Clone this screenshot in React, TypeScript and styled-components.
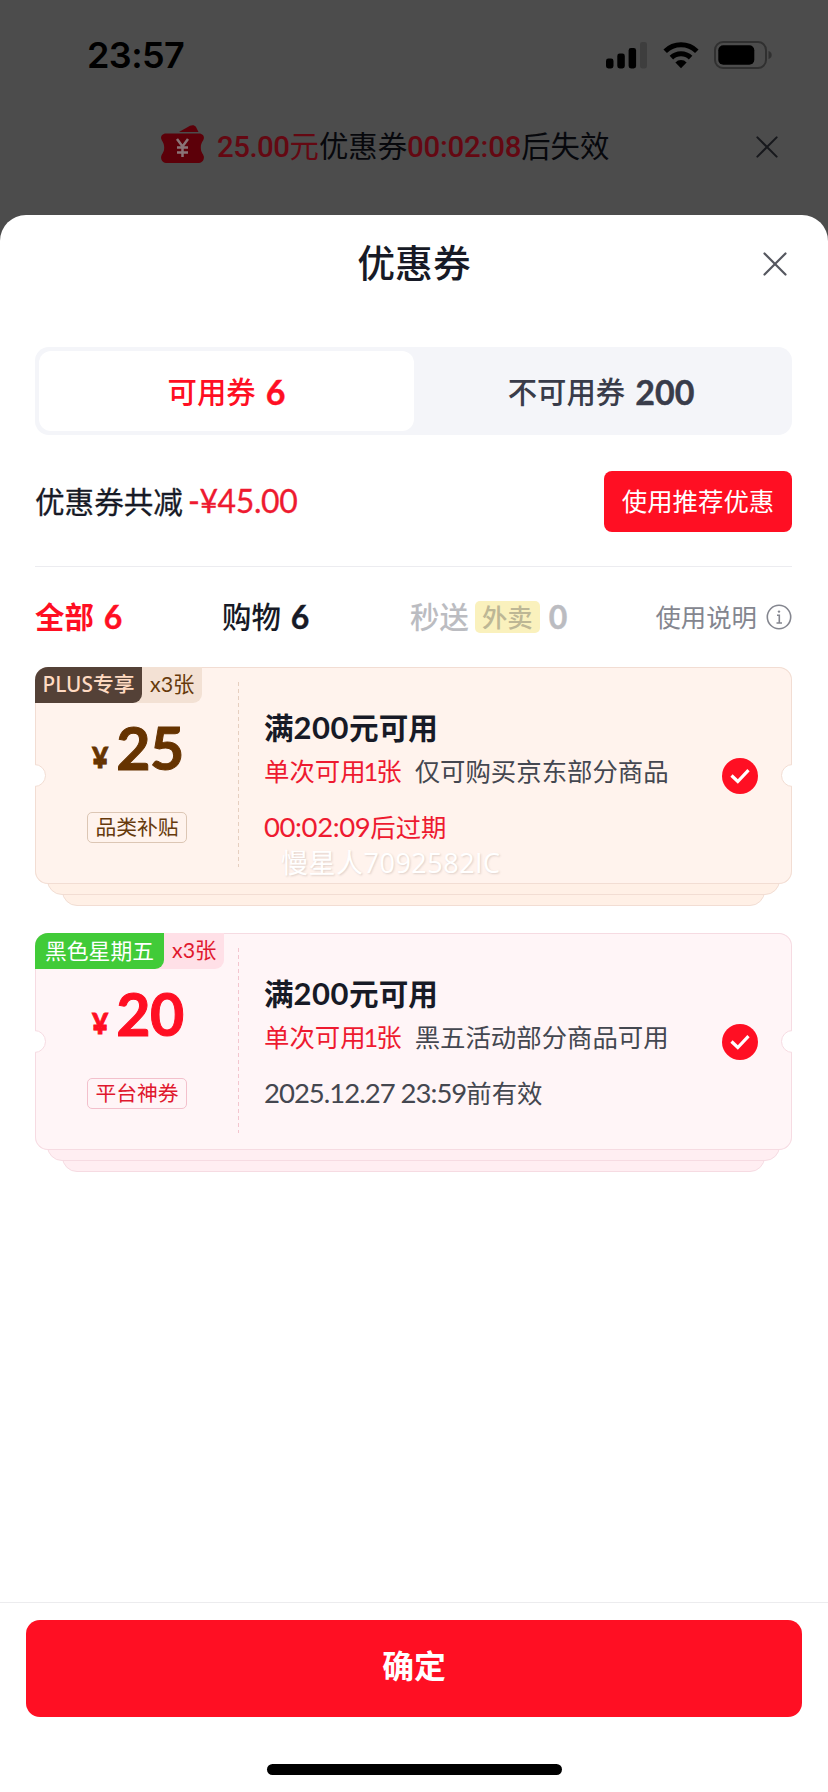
import React from "react";
import styled, { createGlobalStyle, css } from "styled-components";

const GlobalStyle = createGlobalStyle`
  * { box-sizing: border-box; }
  html, body { margin: 0; padding: 0; }
  body {
    width: 828px;
    height: 1792px;
    overflow: hidden;
    background: #4c4c4c;
    font-family: Lato, "Noto Sans CJK SC", sans-serif;
    color: #171a26;
    -webkit-font-smoothing: antialiased;
  }
  button { font: inherit; border: 0; padding: 0; background: none; color: inherit; }
`;

const RED = "#ff0f23";

const Screen = styled.div`
  width: 828px;
  height: 1792px;
  display: flex;
  flex-direction: column;
`;

/* ---- dimmed page behind the sheet ---- */

const StatusBar = styled.header`
  height: 110px;
  padding: 0 56px 0 87px;
  display: flex;
  align-items: center;
  justify-content: space-between;
`;

const Clock = styled.time`
  font-family: Inter, sans-serif;
  font-weight: 600;
  font-size: 36px;
  line-height: 44px;
  letter-spacing: -0.6px;
  color: #000;
`;

const StatusIcons = styled.div`
  display: flex;
  align-items: center;
  gap: 15px;
`;

const Notice = styled.div`
  height: 105px;
  padding: 0 50px 32px 160px;
  display: flex;
  align-items: center;
`;

const NoticeText = styled.p`
  margin: 0 auto 0 12px;
  font-size: 29.4px;
  line-height: 40px;
  white-space: nowrap;
  color: #07080c;
`;

const NoticeAmount = styled.span<{ $track: number }>`
  font-family: Roboto, sans-serif;
  color: #640812;
  font-weight: 500;
  letter-spacing: ${(p) => p.$track}px;
`;

const NoticeUnit = styled.span`
  color: #640812;
`;

/* ---- sheet ---- */

const Sheet = styled.main`
  flex: 1;
  background: #fff;
  border-radius: 26px 26px 0 0;
  display: flex;
  flex-direction: column;
`;

const SheetHeader = styled.div`
  height: 132px;
  padding: 0 40px 34px;
  display: grid;
  grid-template-columns: 26px 1fr 26px;
  align-items: center;
`;

const SheetTitle = styled.h1`
  grid-column: 2;
  margin: 0;
  padding-bottom: 2px;
  text-align: center;
  font-size: 37.8px;
  line-height: 50px;
  font-weight: 500;
`;

const CloseButton = styled.button`
  display: flex;
  justify-content: center;
`;

const Body = styled.div`
  flex: 1;
  padding: 0 36px 0 35px;
`;

const Segments = styled.div`
  height: 88px;
  padding: 4px;
  display: grid;
  grid-template-columns: 375px 1fr;
  background: #f4f5f9;
  border-radius: 14px;
`;

const Segment = styled.button<{ $active?: boolean }>`
  padding-top: 2px;
  display: flex;
  align-items: center;
  justify-content: center;
  gap: 10px;
  border-radius: 12px;
  font-size: 29.4px;
  line-height: 40px;
  font-weight: 500;
  color: #393c4a;
  ${(p) =>
    p.$active &&
    css`
      background: #fff;
      color: ${RED};
    `}
`;

const Count = styled.span<{ $size?: number }>`
  font-size: ${(p) => p.$size ?? 34}px;
  font-weight: 700;
  -webkit-text-stroke: 0.4px currentColor;
`;

const Summary = styled.section`
  height: 132px;
  padding-top: 1px;
  display: flex;
  align-items: center;
  justify-content: space-between;
  border-bottom: 1px solid #ececf0;
`;

const SummaryText = styled.p`
  margin: 0;
  display: flex;
  align-items: baseline;
  gap: 5px;
  font-size: 29.6px;
  line-height: 40px;
  -webkit-text-stroke: 0.3px currentColor;
`;

const Saved = styled.span`
  font-size: 32px;
  letter-spacing: -0.4px;
  color: #ee1a30;
`;

const RecommendButton = styled.button`
  width: 188px;
  height: 61px;
  border-radius: 8px;
  background: ${RED};
  color: #fff;
  font-size: 25.4px;
  line-height: 36px;
`;

const Filters = styled.nav`
  height: 100px;
  display: grid;
  grid-template-columns: 187px 188px 1fr auto;
  align-items: center;
`;

const Filter = styled.button<{ $tone: "active" | "normal" | "muted" }>`
  display: flex;
  align-items: center;
  font-size: 29.4px;
  line-height: 40px;
  font-weight: ${(p) => (p.$tone === "active" ? 700 : 500)};
  color: ${(p) => ({ active: RED, normal: "#171a26", muted: "#bbbcc1" })[p.$tone]};
  ${Count} { margin-left: 10px; }
`;

const Takeaway = styled.span`
  width: 65px;
  height: 32px;
  margin-left: 6px;
  margin-right: -1px;
  display: flex;
  align-items: center;
  justify-content: center;
  border-radius: 5px;
  background: #faf1bd;
  color: #bdb795;
  font-size: 25.4px;
`;

const Help = styled.button`
  display: flex;
  align-items: center;
  gap: 9px;
  font-size: 25.4px;
  line-height: 36px;
  color: #84868f;
`;

/* ---- coupons ---- */

interface Palette {
  face: string;
  back: string;
  line: string;
  dash: string;
  accent: string;
  badge: string;
  badgeText: string;
  count: string;
  countText: string;
  tagLine: string;
}

const Coupon = styled.article`
  margin-bottom: 27px;
`;

const Ticket = styled.div<{ $p: Palette }>`
  position: relative;
  z-index: 2;
  height: 217px;
  display: grid;
  grid-template-columns: 203px 1fr 70px;
  overflow: hidden;
  border-radius: 13px;
  background: ${(c) => c.$p.face};
  box-shadow: inset 0 0 0 1px ${(c) => c.$p.line};
`;

const Notch = styled.i<{ $side: "left" | "right"; $line: string }>`
  position: absolute;
  top: 97px;
  ${(p) => p.$side}: -12px;
  width: 23px;
  height: 23px;
  border-radius: 50%;
  background: #fff;
  border: 1px solid ${(p) => p.$line};
`;

const BackLayer = styled.div<{ $p: Palette; $inset: number; $z: number }>`
  position: relative;
  z-index: ${(c) => c.$z};
  height: 31px;
  margin: -20px ${(c) => c.$inset}px 0;
  border: 1px solid ${(c) => c.$p.line};
  border-radius: 0 0 15px 15px;
  background: ${(c) => c.$p.back};
`;

const Worth = styled.div`
  display: flex;
  flex-direction: column;
  align-items: flex-start;
`;

const Badges = styled.div`
  display: flex;
  height: 36px;
`;

const Badge = styled.span<{ $w: number; $size: number; $weight: number; $p: Palette }>`
  position: relative;
  z-index: 1;
  width: ${(c) => c.$w}px;
  text-align: center;
  border-radius: 0 0 9px 0;
  background: ${(c) => c.$p.badge};
  color: ${(c) => c.$p.badgeText};
  font-family: "Noto Sans", "Noto Sans CJK SC", sans-serif;
  font-size: ${(c) => c.$size}px;
  font-weight: ${(c) => c.$weight};
  line-height: 35px;
  white-space: nowrap;
`;

const Quantity = styled.span<{ $p: Palette }>`
  width: 70px;
  margin-left: -10px;
  padding-left: 18px;
  border-radius: 0 0 9px 0;
  background: ${(c) => c.$p.count};
  color: ${(c) => c.$p.countText};
  font-size: 21.4px;
  line-height: 35px;
  white-space: nowrap;
`;

const Price = styled.div<{ $color: string }>`
  height: 90px;
  padding-left: 57px;
  display: flex;
  align-items: baseline;
  gap: 8px;
  color: ${(p) => p.$color};
  font-weight: 900;
  font-size: 28px;
  line-height: 90px;
`;

const Currency = styled.span`
  position: relative;
  top: -2px;
  -webkit-text-stroke: 0.8px currentColor;
`;

const PriceValue = styled.span`
  font-size: 59px;
  font-weight: 700;
  letter-spacing: -0.5px;
  -webkit-text-stroke: 1px currentColor;
`;

const Kind = styled.span<{ $p: Palette }>`
  width: 100px;
  height: 31px;
  margin: 19px 0 0 52px;
  border: 1px solid ${(c) => c.$p.tagLine};
  border-radius: 5px;
  text-align: center;
  color: ${(c) => c.$p.countText};
  font-size: 20.8px;
  line-height: 27px;
`;

const Details = styled.div<{ $dash: string }>`
  position: relative;
  padding: 39px 0 0 26px;
  white-space: nowrap;
  &::before {
    content: "";
    position: absolute;
    left: 0;
    top: 15px;
    width: 1px;
    height: 185px;
    background: repeating-linear-gradient(${(p) => p.$dash} 0 4px, transparent 4px 7px);
  }
`;

const Condition = styled.h2`
  margin: 0;
  font-size: 29.6px;
  line-height: 42px;
  font-weight: 700;
`;

const Threshold = styled.span`
  font-size: 31px;
  letter-spacing: 0.5px;
`;

const Scope = styled.p`
  margin: 2px 0 0;
  display: flex;
  gap: 13px;
  font-size: 25.4px;
  line-height: 40px;
  color: #444750;
`;

const Limit = styled.span`
  color: #ee1a30;
`;

const LimitCount = styled.span`
  margin: 0 -2px;
`;

const Validity = styled.p<{ $urgent?: boolean }>`
  margin: 16px 0 0;
  font-size: 25.4px;
  line-height: 40px;
  color: ${(p) => (p.$urgent ? "#ee1a30" : "#444750")};
`;

const Stamp = styled.span<{ $track: number }>`
  font-size: 27.5px;
  letter-spacing: ${(p) => p.$track}px;
`;

const Selected = styled.div`
  display: flex;
  align-items: center;
`;

const Watermark = styled.span`
  position: absolute;
  left: 281px;
  top: 844px;
  z-index: 5;
  font-family: "Open Sans", "Noto Sans CJK SC", sans-serif;
  font-size: 27px;
  line-height: 38px;
  letter-spacing: 0.5px;
  color: #fff;
  text-shadow: 1px 1px 2px rgba(120, 100, 90, 0.24);
  white-space: nowrap;
`;

/* ---- footer ---- */

const Footer = styled.footer`
  height: 190px;
  padding: 17px 26px 17px;
  border-top: 1px solid #ececee;
  display: flex;
  flex-direction: column;
  align-items: center;
  justify-content: space-between;
`;

const ConfirmButton = styled.button`
  width: 100%;
  height: 97px;
  padding-bottom: 6px;
  border-radius: 14px;
  background: ${RED};
  color: #fff;
  font-size: 31.8px;
  line-height: 44px;
  font-weight: 700;
`;

const HomeIndicator = styled.div`
  width: 295px;
  height: 11px;
  border-radius: 6px;
  background: #000;
`;

/* ---- icons ---- */

const Cross = ({ size, color }: { size: number; color: string }) => (
  <svg width={size} height={size} viewBox="0 0 24 24" fill="none" stroke={color} strokeWidth="2.2" strokeLinecap="round">
    <path d="M1.5 1.5 22.5 22.5M22.5 1.5 1.5 22.5" />
  </svg>
);

const Signal = () => (
  <svg width="42" height="28" viewBox="0 0 42 28">
    <rect x="0" y="17.5" width="7.5" height="10" rx="2.4" />
    <rect x="11.3" y="12.5" width="7.5" height="15" rx="2.4" />
    <rect x="22.6" y="7" width="7.5" height="20.5" rx="2.4" />
    <rect x="34" y="1" width="7" height="26.5" rx="2.4" fill="#3e3e3e" />
  </svg>
);

const Wifi = () => (
  <svg width="36" height="28" viewBox="0 0 36 28" fill="none" stroke="#000" strokeWidth="5">
    <path d="M2.2 10.2a22.5 22.5 0 0 1 31.6 0" />
    <path d="M8.4 16.6a13.7 13.7 0 0 1 19.2 0" />
    <path d="M18 27.2 12.4 21.4a8 8 0 0 1 11.2 0Z" fill="#000" stroke="none" />
  </svg>
);

const Battery = () => (
  <svg width="58" height="28" viewBox="0 0 58 28" fill="none">
    <rect x="1" y="1" width="51" height="26" rx="8" stroke="#303030" strokeWidth="2" />
    <rect x="4.3" y="4.3" width="36" height="19.4" rx="5" fill="#000" />
    <path d="M54.5 10c2.6 1 3.2 2.4 3.2 4s-.6 3-3.2 4Z" fill="#303030" />
  </svg>
);

const TicketIcon = () => (
  <svg width="45" height="43" viewBox="0 0 45 43">
    <path d="M19 7 30 .8c2.500-1.200 4.800-.6 6 1.200L38.500 7Z" fill="#5c0009" />
    <path
      d="M6 8.500h33c3.200 0 5.500 2.400 4.800 5.200-.6 2.400-3 3.800-3 8.800s2.400 6.400 3 8.800c.6 3-1.300 6.700-4.800 6.700H6c-3.500 0-5.400-3.700-4.800-6.700.6-2.400 3-3.800 3-8.800s-2.400-6.400-3-8.800C.5 10.900 2.800 8.500 6 8.500Z"
      fill="#5c0009"
    />
    <path d="m17 14 5.500 7.500L28 14M22.500 21.500V32M17 22.500h11M17 27.500h11" fill="none" stroke="#8a7477" strokeWidth="2.500" />
  </svg>
);

const InfoIcon = () => (
  <svg width="26" height="26" viewBox="0 0 26 26" fill="none" stroke="#84868f" strokeWidth="1.6">
    <circle cx="13" cy="13" r="11.7" />
    <path d="M11 11.200h2.300v7.500M10.500 19h5.500" />
    <circle cx="13" cy="7.6" r="1.2" fill="#84868f" stroke="none" />
  </svg>
);

const CheckIcon = () => (
  <svg width="36" height="36" viewBox="0 0 36 36" fill="none">
    <circle cx="18" cy="18" r="18" fill={RED} />
    <path d="m9.500 17.500 6.300 6L26.500 12.200" stroke="#fff" strokeWidth="3.2" />
  </svg>
);

interface CouponData {
  palette: Palette;
  badge: string;
  badgeWidth: number;
  badgeSize: number;
  badgeWeight: number;
  amount: string;
  kind: string;
  scope: string;
  stamp: string;
  stampTrack: number;
  suffix: string;
  urgent?: boolean;
}

const coupons: CouponData[] = [
  {
    palette: {
      face: "#fff3ed", back: "#fff0e6", line: "#f2ddd3", dash: "#e6cfc0", accent: "#663300",
      badge: "#544137", badgeText: "#ffdac2", count: "#f3e1d4", countText: "#663a0c", tagLine: "#dcc6b4",
    },
    badge: "PLUS专享", badgeWidth: 107, badgeSize: 20.8, badgeWeight: 500, amount: "25", kind: "品类补贴",
    scope: "仅可购买京东部分商品", stamp: "00:02:09", stampTrack: -0.4, suffix: "后过期", urgent: true,
  },
  {
    palette: {
      face: "#fff5f7", back: "#ffeef2", line: "#f6dbe2", dash: "#f3c6cf", accent: RED,
      badge: "#41cb38", badgeText: "#ffffff", count: "#ffe0e7", countText: "#e0182e", tagLine: "#f3c0cc",
    },
    badge: "黑色星期五", badgeWidth: 129, badgeSize: 21.8, badgeWeight: 400, amount: "20", kind: "平台神券",
    scope: "黑五活动部分商品可用", stamp: "2025.12.27 23:59", stampTrack: -1, suffix: "前有效",
  },
];

const CouponCard = ({ data }: { data: CouponData }) => {
  const p = data.palette;
  return (
    <Coupon>
      <Ticket $p={p}>
        <Worth>
          <Badges>
            <Badge $w={data.badgeWidth} $size={data.badgeSize} $weight={data.badgeWeight} $p={p}>{data.badge}</Badge>
            <Quantity $p={p}>x3张</Quantity>
          </Badges>
          <Price $color={p.accent}>
            <Currency>¥</Currency>
            <PriceValue>{data.amount}</PriceValue>
          </Price>
          <Kind $p={p}>{data.kind}</Kind>
        </Worth>
        <Details $dash={p.dash}>
          <Condition>满<Threshold>200</Threshold>元可用</Condition>
          <Scope>
            <Limit>单次可用<LimitCount>1</LimitCount>张</Limit>
            <span>{data.scope}</span>
          </Scope>
          <Validity $urgent={data.urgent}>
            <Stamp $track={data.stampTrack}>{data.stamp}</Stamp>
            {data.suffix}
          </Validity>
        </Details>
        <Selected><CheckIcon /></Selected>
        <Notch $side="left" $line={p.line} />
        <Notch $side="right" $line={p.line} />
      </Ticket>
      <BackLayer $p={p} $inset={12} $z={1} />
      <BackLayer $p={p} $inset={27} $z={0} />
    </Coupon>
  );
};

export default function App() {
  return (
    <Screen>
      <GlobalStyle />
      <StatusBar>
        <Clock>23:57</Clock>
        <StatusIcons>
          <Signal />
          <Wifi />
          <Battery />
        </StatusIcons>
      </StatusBar>
      <Notice>
        <TicketIcon />
        <NoticeText>
          <NoticeAmount $track={-0.5}>25.00</NoticeAmount>
          <NoticeUnit>元</NoticeUnit>优惠券
          <NoticeAmount $track={-0.2}>00:02:08</NoticeAmount>后失效
        </NoticeText>
        <Cross size={22} color="#17181c" />
      </Notice>
      <Sheet>
        <SheetHeader>
          <SheetTitle>优惠券</SheetTitle>
          <CloseButton aria-label="关闭"><Cross size={24} color="#55575f" /></CloseButton>
        </SheetHeader>
        <Body>
          <Segments>
            <Segment $active>可用券<Count>6</Count></Segment>
            <Segment>不可用券<Count>200</Count></Segment>
          </Segments>
          <Summary>
            <SummaryText>优惠券共减<Saved>-¥45.00</Saved></SummaryText>
            <RecommendButton>使用推荐优惠</RecommendButton>
          </Summary>
          <Filters>
            <Filter $tone="active">全部<Count $size={32}>6</Count></Filter>
            <Filter $tone="normal">购物<Count $size={32}>6</Count></Filter>
            <Filter $tone="muted">秒送<Takeaway>外卖</Takeaway><Count $size={32}>0</Count></Filter>
            <Help>使用说明<InfoIcon /></Help>
          </Filters>
          {coupons.map((c) => <CouponCard key={c.badge} data={c} />)}
        </Body>
        <Footer>
          <ConfirmButton>确定</ConfirmButton>
          <HomeIndicator />
        </Footer>
      </Sheet>
      <Watermark>慢星人7092582IC</Watermark>
    </Screen>
  );
}
